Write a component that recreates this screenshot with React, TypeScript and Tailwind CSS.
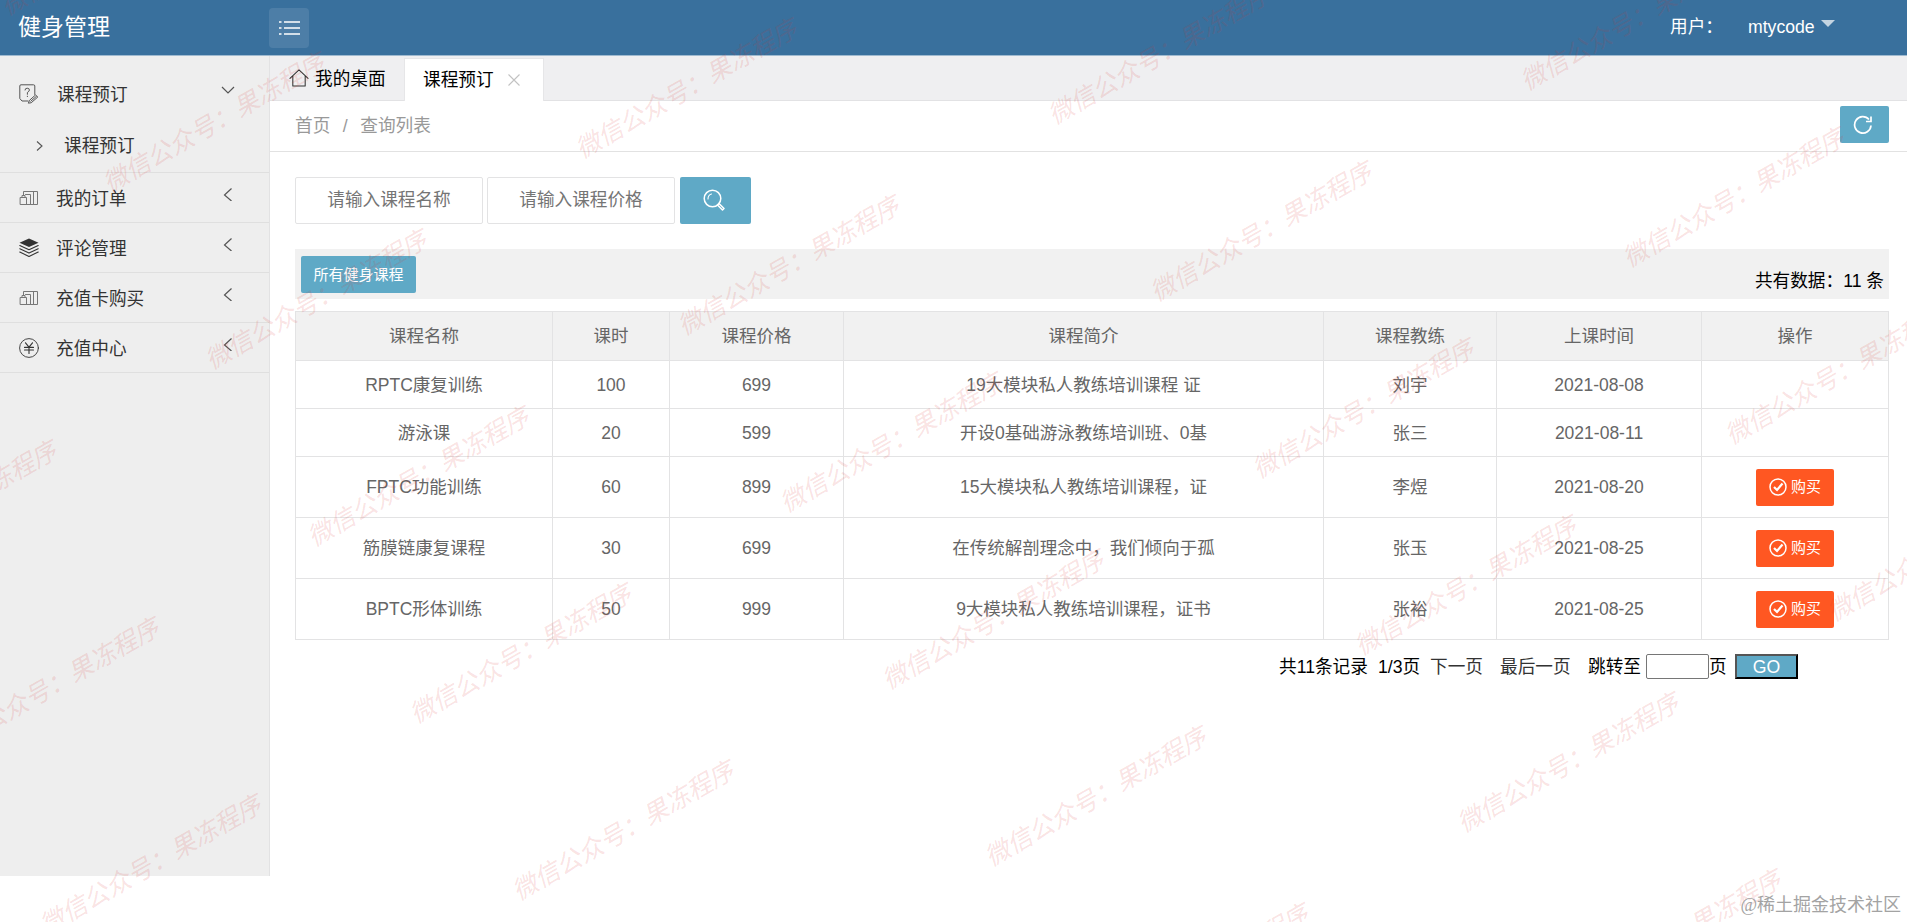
import React from 'react';

const HEADERS = ['课程名称', '课时', '课程价格', '课程简介', '课程教练', '上课时间', '操作'];

interface Course {
  name: string;
  hours: number;
  price: number;
  intro: string;
  coach: string;
  date: string;
  buyable: boolean;
}

const COURSES: Course[] = [
  { name: 'RPTC康复训练', hours: 100, price: 699, intro: '19大模块私人教练培训课程 证', coach: '刘宇', date: '2021-08-08', buyable: false },
  { name: '游泳课', hours: 20, price: 599, intro: '开设0基础游泳教练培训班、0基', coach: '张三', date: '2021-08-11', buyable: false },
  { name: 'FPTC功能训练', hours: 60, price: 899, intro: '15大模块私人教练培训课程，证', coach: '李煜', date: '2021-08-20', buyable: true },
  { name: '筋膜链康复课程', hours: 30, price: 699, intro: '在传统解剖理念中，我们倾向于孤', coach: '张玉', date: '2021-08-25', buyable: true },
  { name: 'BPTC形体训练', hours: 50, price: 999, intro: '9大模块私人教练培训课程，证书', coach: '张裕', date: '2021-08-25', buyable: true }
];

const stroke = { fill: 'none', stroke: 'currentColor', strokeLinecap: 'round' as const, strokeLinejoin: 'round' as const };

function NoteIcon() {
  return (
    <svg className="h-5 w-5 text-[#555]" viewBox="0 0 20 20" {...stroke} strokeWidth={1}>
      <path d="M9 17H3L.8 14.500V2Q.8 .8 2 .8H14.500Q15.800 .8 15.800 2V10.500" />
      <path d="M6 6Q6 4.200 8.200 4.200T10.400 6Q10.400 7.300 8.400 8.500V10.300M8.400 12.200V12.600" />
      <path d="M9.500 18.800L10.500 16.300L16.500 11L18.800 13L12.500 18.500ZM11.800 17.200L17.300 12.400" />
    </svg>
  );
}

function BuildingIcon() {
  return (
    <svg className="h-5 w-5 text-[#777]" viewBox="0 0 20 20" {...stroke} strokeWidth={1}>
      <path d="M1.500 9.500H7.500V16.500H1.500ZM3 9.500V7.500H6V9.500" />
      <path d="M4.500 7V3.500H18.500V16.500H14.500V3.500M7.500 16.500H11.500V6.500H6.500M11.500 16.500H14.500" />
    </svg>
  );
}

function LayersIcon() {
  return (
    <svg className="h-5 w-5" viewBox="0 0 20 20" {...stroke} strokeWidth={1.1}>
      <path d="M10 .5L19.500 4.800L10 9L.5 4.800Z" fill="currentColor" stroke="none" />
      <path d="M.8 7.500L10 11.800L19.200 7.500M.8 10.800L10 15.100L19.200 10.800M.8 14.100L10 18.400L19.200 14.100" />
    </svg>
  );
}

function YenIcon() {
  return (
    <svg className="h-5 w-5" viewBox="0 0 20 20" {...stroke} strokeWidth={0.9}>
      <circle cx="10" cy="10" r="9.400" />
      <path d="M6.500 4.800L10 9.200L13.500 4.800M5.500 9.400H14.500M5.500 12H14.500M10 9.400V15.500" strokeWidth={1.1} />
    </svg>
  );
}

function Chevron({ d }: { d: string }) {
  return (
    <svg className="mr-[34px] mb-[7px] h-[14px] w-[14px]" viewBox="0 0 14 14" fill="none" stroke="#555" strokeWidth={1.2}>
      <path d={d} />
    </svg>
  );
}

const MENU = [
  { label: '我的订单', Icon: BuildingIcon },
  { label: '评论管理', Icon: LayersIcon },
  { label: '充值卡购买', Icon: BuildingIcon },
  { label: '充值中心', Icon: YenIcon }
];

function Sidebar() {
  return (
    <aside className="h-[820px] w-[270px] shrink-0 border-r border-[#e2e2e3] bg-[#eeeeee] text-[#333]">
      <div className="h-[117px] border-b border-[#dfdfdf] pt-[13px]">
        <div className="flex h-[50px] items-center pl-[19px]">
          <NoteIcon />
          <span className="ml-[18px] flex-1 pt-[2px]">课程预订</span>
          <Chevron d="M1 3L7 9L13 3" />
        </div>
        <div className="flex h-[53px] items-center pl-[36px]">
          <svg className="h-[12px] w-[8px]" viewBox="0 0 8 12" fill="none" stroke="#555" strokeWidth={1.1}>
            <path d="M1 1.500L6 6L1 10.500" />
          </svg>
          <span className="ml-[20px]">课程预订</span>
        </div>
      </div>
      {MENU.map(({ label, Icon }) => (
        <div key={label} className="flex h-[50px] items-center border-b border-[#dfdfdf] pl-[19px]">
          <Icon />
          <span className="ml-[17px] flex-1 pt-[3px]">{label}</span>
          <Chevron d="M10.500 1.500L3.500 8L10.500 14" />
        </div>
      ))}
    </aside>
  );
}

function Header() {
  return (
    <header className="flex h-[56px] items-center border-b border-[#9fbad0] bg-[#39709d] text-white">
      <div className="w-[269px] pb-[2px] pl-[18px] text-[23px]">健身管理</div>
      <button className="flex h-10 w-10 items-center justify-center rounded bg-white/10">
        <svg className="h-[14px] w-[21px]" viewBox="0 0 21 14" fill="none" stroke="#fff" strokeWidth={1.5}>
          <path d="M0 1H2.500M5 1H21M0 7H2.500M5 7H21M0 13H2.500M5 13H21" />
        </svg>
      </button>
      <span className="mb-[2px] ml-auto w-[78px]">用户：</span>
      <span className="mb-[2px] w-[73px]">mtycode</span>
      <span className="mr-[72px] mb-[9px] border-x-[7px] border-t-[7px] border-x-transparent border-t-[#c4d4e1]" />
    </header>
  );
}

function Tabs() {
  return (
    <div className="flex h-[45px] items-end border-b border-[#e2e2e4] bg-[#efeff1] text-black">
      <div className="flex h-[43px] w-[134px] items-center pl-[19px]">
        <svg className="mb-[2px] h-5 w-[20px] text-[#333]" viewBox="0 0 21 20" {...stroke} strokeWidth={1.1}>
          <path d="M1 10.500L10.500 1.500L20 10.500M4 8V18.500H17V8" />
        </svg>
        <span className="ml-[6px] pt-px">我的桌面</span>
      </div>
      <div className="-mb-px flex h-[43px] w-[140px] items-center border border-b-0 border-[#e6e6e8] bg-white pb-px pl-[18px]">
        课程预订
        <svg className="ml-[14px] h-[12px] w-[12px]" viewBox="0 0 12 12" stroke="#c2c2c2" strokeWidth={1.1}>
          <path d="M.5 .5L11.500 11.500M11.500 .5L.5 11.500" />
        </svg>
      </div>
    </div>
  );
}

function BuyButton() {
  return (
    <button className="flex h-[37px] w-[78px] items-center justify-center gap-1 rounded-[2px] bg-[#ff5722] text-[15px] text-white">
      <svg className="h-[18px] w-[18px]" viewBox="0 0 18 18" fill="none" stroke="#fff" strokeWidth={1.5}>
        <circle cx="9" cy="9" r="8" />
        <path d="M5 9L8 12L13.500 5.500" strokeWidth={2.2} />
      </svg>
      购买
    </button>
  );
}

function CourseTable() {
  const cell = 'border border-[#e3e3e4] p-0 text-center font-normal';
  return (
    <table className="mt-[12px] w-[1594px] table-fixed border-collapse text-[17.5px] text-[#666]">
      <colgroup>
        <col className="w-[257px]" />
        <col className="w-[117px]" />
        <col className="w-[174px]" />
        <col className="w-[480px]" />
        <col className="w-[173px]" />
        <col className="w-[205px]" />
        <col className="w-[187px]" />
      </colgroup>
      <thead>
        <tr className="h-[49px] bg-[#f1f1f1]">
          {HEADERS.map((h) => (
            <th key={h} className={cell}>{h}</th>
          ))}
        </tr>
      </thead>
      <tbody>
        {COURSES.map((c) => (
          <tr key={c.name} className={c.buyable ? 'h-[61px]' : 'h-[48px]'}>
            <td className={cell}>{c.name}</td>
            <td className={cell}>{c.hours}</td>
            <td className={cell}>{c.price}</td>
            <td className={cell}>{c.intro}</td>
            <td className={cell}>{c.coach}</td>
            <td className={cell}>{c.date}</td>
            <td className={cell}>
              <div className="flex justify-center">{c.buyable && <BuyButton />}</div>
            </td>
          </tr>
        ))}
      </tbody>
    </table>
  );
}

function Pager() {
  return (
    <div className="mt-[14px] flex h-[25px] items-center pl-[984px] whitespace-nowrap text-black">
      <span className="w-[99px]">共11条记录</span>
      <span className="w-[52px]">1/3页</span>
      <span className="w-[70px] text-[#333]">下一页</span>
      <span className="w-[88px] text-[#333]">最后一页</span>
      <span className="w-[58px]">跳转至</span>
      <input className="h-[25px] w-[63px] rounded-[2px] border border-[#767676] bg-white" />
      <span className="w-[26px]">页</span>
      <button className="h-[25px] w-[63px] border-2 border-t-[#555] border-r-black border-b-black border-l-[#555] bg-[#5fa9c6] leading-[20px] text-white">GO</button>
    </div>
  );
}

// Tiled diagonal watermark, one text per lattice point
function Watermark() {
  const points: { x: number; y: number }[] = [];
  for (let col = -3; col <= 4; col++) {
    for (let row = -8; row <= 4; row++) {
      const x = 525 + col * 472.5 + row * 102.3;
      const y = 887 - col * 34 + row * 177;
      if (x > -200 && x < 1920 && y > -5 && y < 1040) points.push({ x, y });
    }
  }
  return (
    <svg className="pointer-events-none absolute inset-0 h-[922px] w-[1907px]" viewBox="0 0 1907 922">
      {points.map((p) => (
        <text
          key={`${p.x},${p.y}`}
          transform={`translate(${p.x} ${p.y}) rotate(-29.900)`}
          x={-12.5}
          y={9}
          fontSize={25.1}
          fontStyle="italic"
          fill="#d8342f"
          fillOpacity={0.15}
        >
          微信公众号：果冻程序
        </text>
      ))}
    </svg>
  );
}

export default function App() {
  return (
    <div className="relative h-[922px] w-[1907px] overflow-hidden bg-white font-['Liberation_Sans','Noto_Sans_CJK_SC',sans-serif] text-[17.65px] leading-[26px]">
      <Header />
      <div className="flex">
        <Sidebar />
        <main className="flex-1">
          <Tabs />
          <div className="flex h-[51px] items-center justify-between border-b border-[#e2e2e2] pr-[18px] pl-[25px] text-[#999]">
            <div className="flex">
              <span>首页</span>
              <span className="w-[30px] text-center">/</span>
              <span>查询列表</span>
            </div>
            <button className="mb-[3px] flex h-[37px] w-[49px] items-center justify-center rounded-[2px] bg-[#5fa9c6] pr-1">
              <svg className="h-5 w-5" viewBox="0 0 20 20" fill="none" stroke="#fff" strokeWidth={1.7}>
                <path d="M18 10.500A8.200 8.200 0 1 1 16 4.500M18 1.500V6.500H13" />
              </svg>
            </button>
          </div>
          <div className="pt-[25px] pl-[25px]">
            <div className="flex">
              <input className="h-[47px] w-[188px] rounded-[2px] border border-[#e3e3e4] text-center placeholder:text-[#757575]" placeholder="请输入课程名称" />
              <input className="ml-1 h-[47px] w-[188px] rounded-[2px] border border-[#e3e3e4] text-center placeholder:text-[#757575]" placeholder="请输入课程价格" />
              <button className="ml-[5px] flex h-[47px] w-[71px] items-center justify-center rounded-[2px] bg-[#5fa9c6] pr-[3px] pb-[2px]">
                <svg className="h-[22px] w-[22px]" viewBox="0 0 22 22" {...stroke} stroke="#fff" strokeWidth={1.5}>
                  <circle cx="9.500" cy="9.500" r="8.300" />
                  <path d="M5 10Q5 6 8.500 5" strokeWidth={1.1} />
                  <path d="M14.500 16L16 14.500L21 19.500L19.500 21Z" />
                </svg>
              </button>
            </div>
            <div className="mt-[25px] flex h-[50px] w-[1594px] justify-between bg-[#f1f1f1] pr-[5px] pl-[6px]">
              <button className="mt-[7px] h-[37px] w-[115px] rounded-[2px] bg-[#5fa9c6] text-[15px] text-white">所有健身课程</button>
              <span className="mt-[19px] text-black">共有数据：11 条</span>
            </div>
            <CourseTable />
            <Pager />
          </div>
        </main>
      </div>
      <Watermark />
      <span className="absolute right-[6px] bottom-[4px] font-['Liberation_Serif','Noto_Sans_CJK_SC',serif] text-[18px] text-[#a3a3a3]">@稀土掘金技术社区</span>
    </div>
  );
}
